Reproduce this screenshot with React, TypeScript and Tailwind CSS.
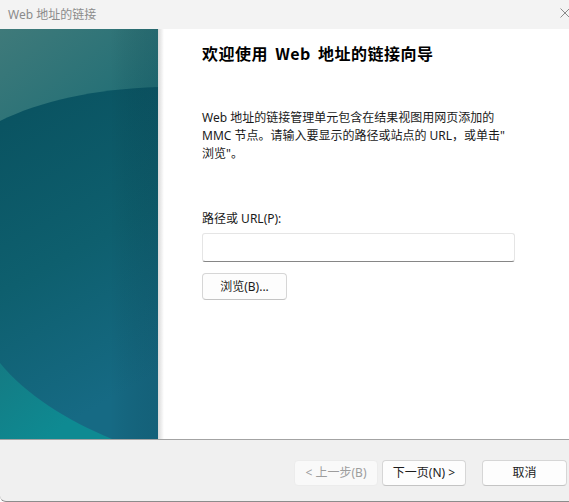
import React from "react";

const ui = {
  fontFamily: '"Noto Sans", "Noto Sans CJK SC", sans-serif',
};

function SidePanel() {
  return (
    <svg width="158" height="410" viewBox="0 0 158 410" className="block shrink-0">
      <defs>
        <linearGradient id="bg" x1="0" y1="0" x2="0.3" y2="1">
          <stop offset="0" stopColor="#3f7a7a" />
          <stop offset="0.5" stopColor="#1a6c75" />
          <stop offset="1" stopColor="#0e8a92" />
        </linearGradient>
        <linearGradient id="shape" x1="0" y1="0" x2="0.25" y2="1">
          <stop offset="0" stopColor="#09515f" />
          <stop offset="0.55" stopColor="#0e5f6e" />
          <stop offset="1" stopColor="#166a84" />
        </linearGradient>
        <linearGradient id="fade" x1="0" y1="0" x2="1" y2="0">
          <stop offset="0" stopColor="#000" stopOpacity="0" />
          <stop offset="1" stopColor="#0a2a3a" stopOpacity="0.14" />
        </linearGradient>
      </defs>
      <rect width="158" height="410" fill="url(#bg)" />
      <path
        d="M0 92 C 40 72, 95 60, 158 58 L158 410 L112 410 C 68 392, 25 365, 0 334 Z"
        fill="url(#shape)"
      />
      <rect x="110" width="48" height="410" fill="url(#fade)" />
    </svg>
  );
}

function Btn({
  children,
  disabled,
  w = "w-[84px] h-[26px]",
}: {
  children: React.ReactNode;
  disabled?: boolean;
  w?: string;
}) {
  return (
    <button
      className={
        w +
        " rounded-[4px] border text-[12px] leading-none flex items-center justify-center " +
        (disabled
          ? "bg-[#f9f9f9] border-[#ececec] text-[#9d9d9d]"
          : "bg-[#fdfdfd] border-[#d6d6d6] border-b-[#c4c4c4] text-[#1b1b1b]")
      }
    >
      {children}
    </button>
  );
}

export default function App() {
  return (
    <div className="w-[569px] h-[502px] flex flex-col bg-white overflow-hidden" style={ui}>
      <div className="h-[29px] shrink-0 bg-[#f3f3f3] flex items-center justify-between pl-[8px]">
        <span className="text-[12px] leading-none text-[#8b8b8b]">Web 地址的链接</span>
        <svg width="10" height="10" viewBox="0 0 10 10" className="mr-[-1px] mb-[3px]">
          <path d="M0.5 0.5 L9.5 9.5 M9.5 0.5 L0.5 9.5" stroke="#8a8a8a" strokeWidth="1" />
        </svg>
      </div>

      <div className="h-[410px] shrink-0 flex">
        <SidePanel />
        <div className="w-[6px] bg-gradient-to-r from-[#d9d9d9] to-white" />
        <div className="flex-1 bg-white pl-[38px] pt-[14px] flex flex-col">
          <h1
            className="text-[16px] leading-[20px] font-bold text-black tracking-[0.5px]"
            style={{ fontFamily: '"Noto Sans CJK SC", sans-serif' }}
          >
            欢迎使用 <span className="mx-[3px]">Web</span> 地址的链接向导
          </h1>
          <p className="mt-[46px] text-[12px] leading-[18px] text-[#1a1a1a]">
            Web 地址的链接管理单元包含在结果视图用网页添加的
            <br />
            MMC 节点。请输入要显示的路径或站点的 URL，或单击"
            <br />
            浏览"。
          </p>
          <label className="mt-[47px] text-[12px] leading-[17px] text-[#1a1a1a]">路径或 URL(P):</label>
          <div className="mt-[6px] w-[313px] h-[29px] rounded-[3px] border border-[#e5e5e5] border-b-[#868686] bg-white" />
          <div className="mt-[11px]">
            <Btn w="w-[85px] h-[27px]">浏览(B)...</Btn>
          </div>
        </div>
      </div>

      <div className="flex-1 bg-[#f0f0f0] border-t border-[#a3a3a3] border-b border-b-[#8c8c8c] rounded-bl-[6px] flex justify-end items-start pt-[20px] pr-[2px]">
        <Btn disabled>&lt; 上一步(B)</Btn>
        <div className="ml-[4px]">
          <Btn>下一页(N) &gt;</Btn>
        </div>
        <div className="ml-[16px]">
          <Btn w="w-[85px] h-[26px]">取消</Btn>
        </div>
      </div>
    </div>
  );
}
